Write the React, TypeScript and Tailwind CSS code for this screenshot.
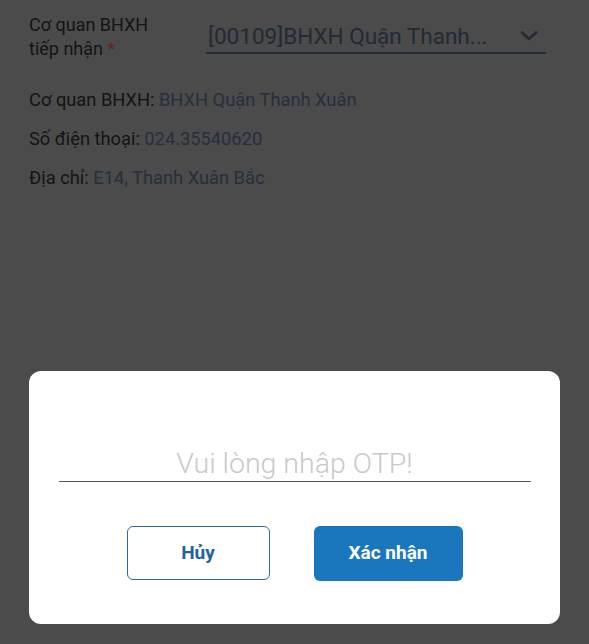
import React from "react";

export default function App() {
  return (
    <div className="w-[589px] h-[644px] bg-[#4b4b4b] overflow-hidden" style={{ fontFamily: "Roboto, 'Noto Sans', sans-serif" }}>
      <div className="pl-[29px] pr-[43px] pt-[13px]">
        <div className="flex items-start">
          <div className="w-[177px] text-[18px] leading-[24px] text-[#141414]">
            <div>Cơ quan BHXH</div>
            <div>
              tiếp nhận <span className="text-[#6b1f1f]">*</span>
            </div>
          </div>
          <div className="flex-1 mt-[9px] flex items-center justify-between border-b-2 border-[#222b38] pl-[2px] pr-[8px] pb-[2px]">
            <span className="text-[22.5px] leading-[28px] text-[#222a36]">[00109]BHXH Quận Thanh...</span>
            <svg width="18" height="12" viewBox="0 0 18 12" fill="none">
              <path d="M2 2.5 L9 9 L16 2.5" stroke="#222a36" strokeWidth="2.6" strokeLinecap="round" strokeLinejoin="round" />
            </svg>
          </div>
        </div>
        <div className="mt-[27px] flex flex-col gap-[15px] text-[18.3px] leading-[24px]">
          <div>
            <span className="text-[#141414]">Cơ quan BHXH: </span>
            <span className="text-[#262f3e]">BHXH Quận Thanh Xuân</span>
          </div>
          <div>
            <span className="text-[#141414]">Số điện thoại: </span>
            <span className="text-[#262f3e]">024.35540620</span>
          </div>
          <div>
            <span className="text-[#141414]">Địa chỉ: </span>
            <span className="text-[#262f3e]">E14, Thanh Xuân Bắc</span>
          </div>
        </div>
      </div>
      <div className="mt-[181px] mx-[29px] h-[253px] bg-white rounded-[12px] flex flex-col items-center">
        <div className="mt-[76px] w-[472px] border-b-[1.5px] border-[#555] text-center">
          <span className="text-[28.5px] leading-[34px] font-light text-[#c9c9c9]">Vui lòng nhập OTP!</span>
        </div>
        <div className="mt-[44px] flex gap-[44px]">
          <button className="w-[143px] h-[54px] rounded-[6px] border-[1.5px] border-[#2b6a9a] text-[#1f63a0] text-[19px] font-bold bg-white">
            Hủy
          </button>
          <button className="w-[149px] h-[55px] rounded-[6px] bg-[#1a76bd] text-white text-[19px] font-bold">
            Xác nhận
          </button>
        </div>
      </div>
    </div>
  );
}
